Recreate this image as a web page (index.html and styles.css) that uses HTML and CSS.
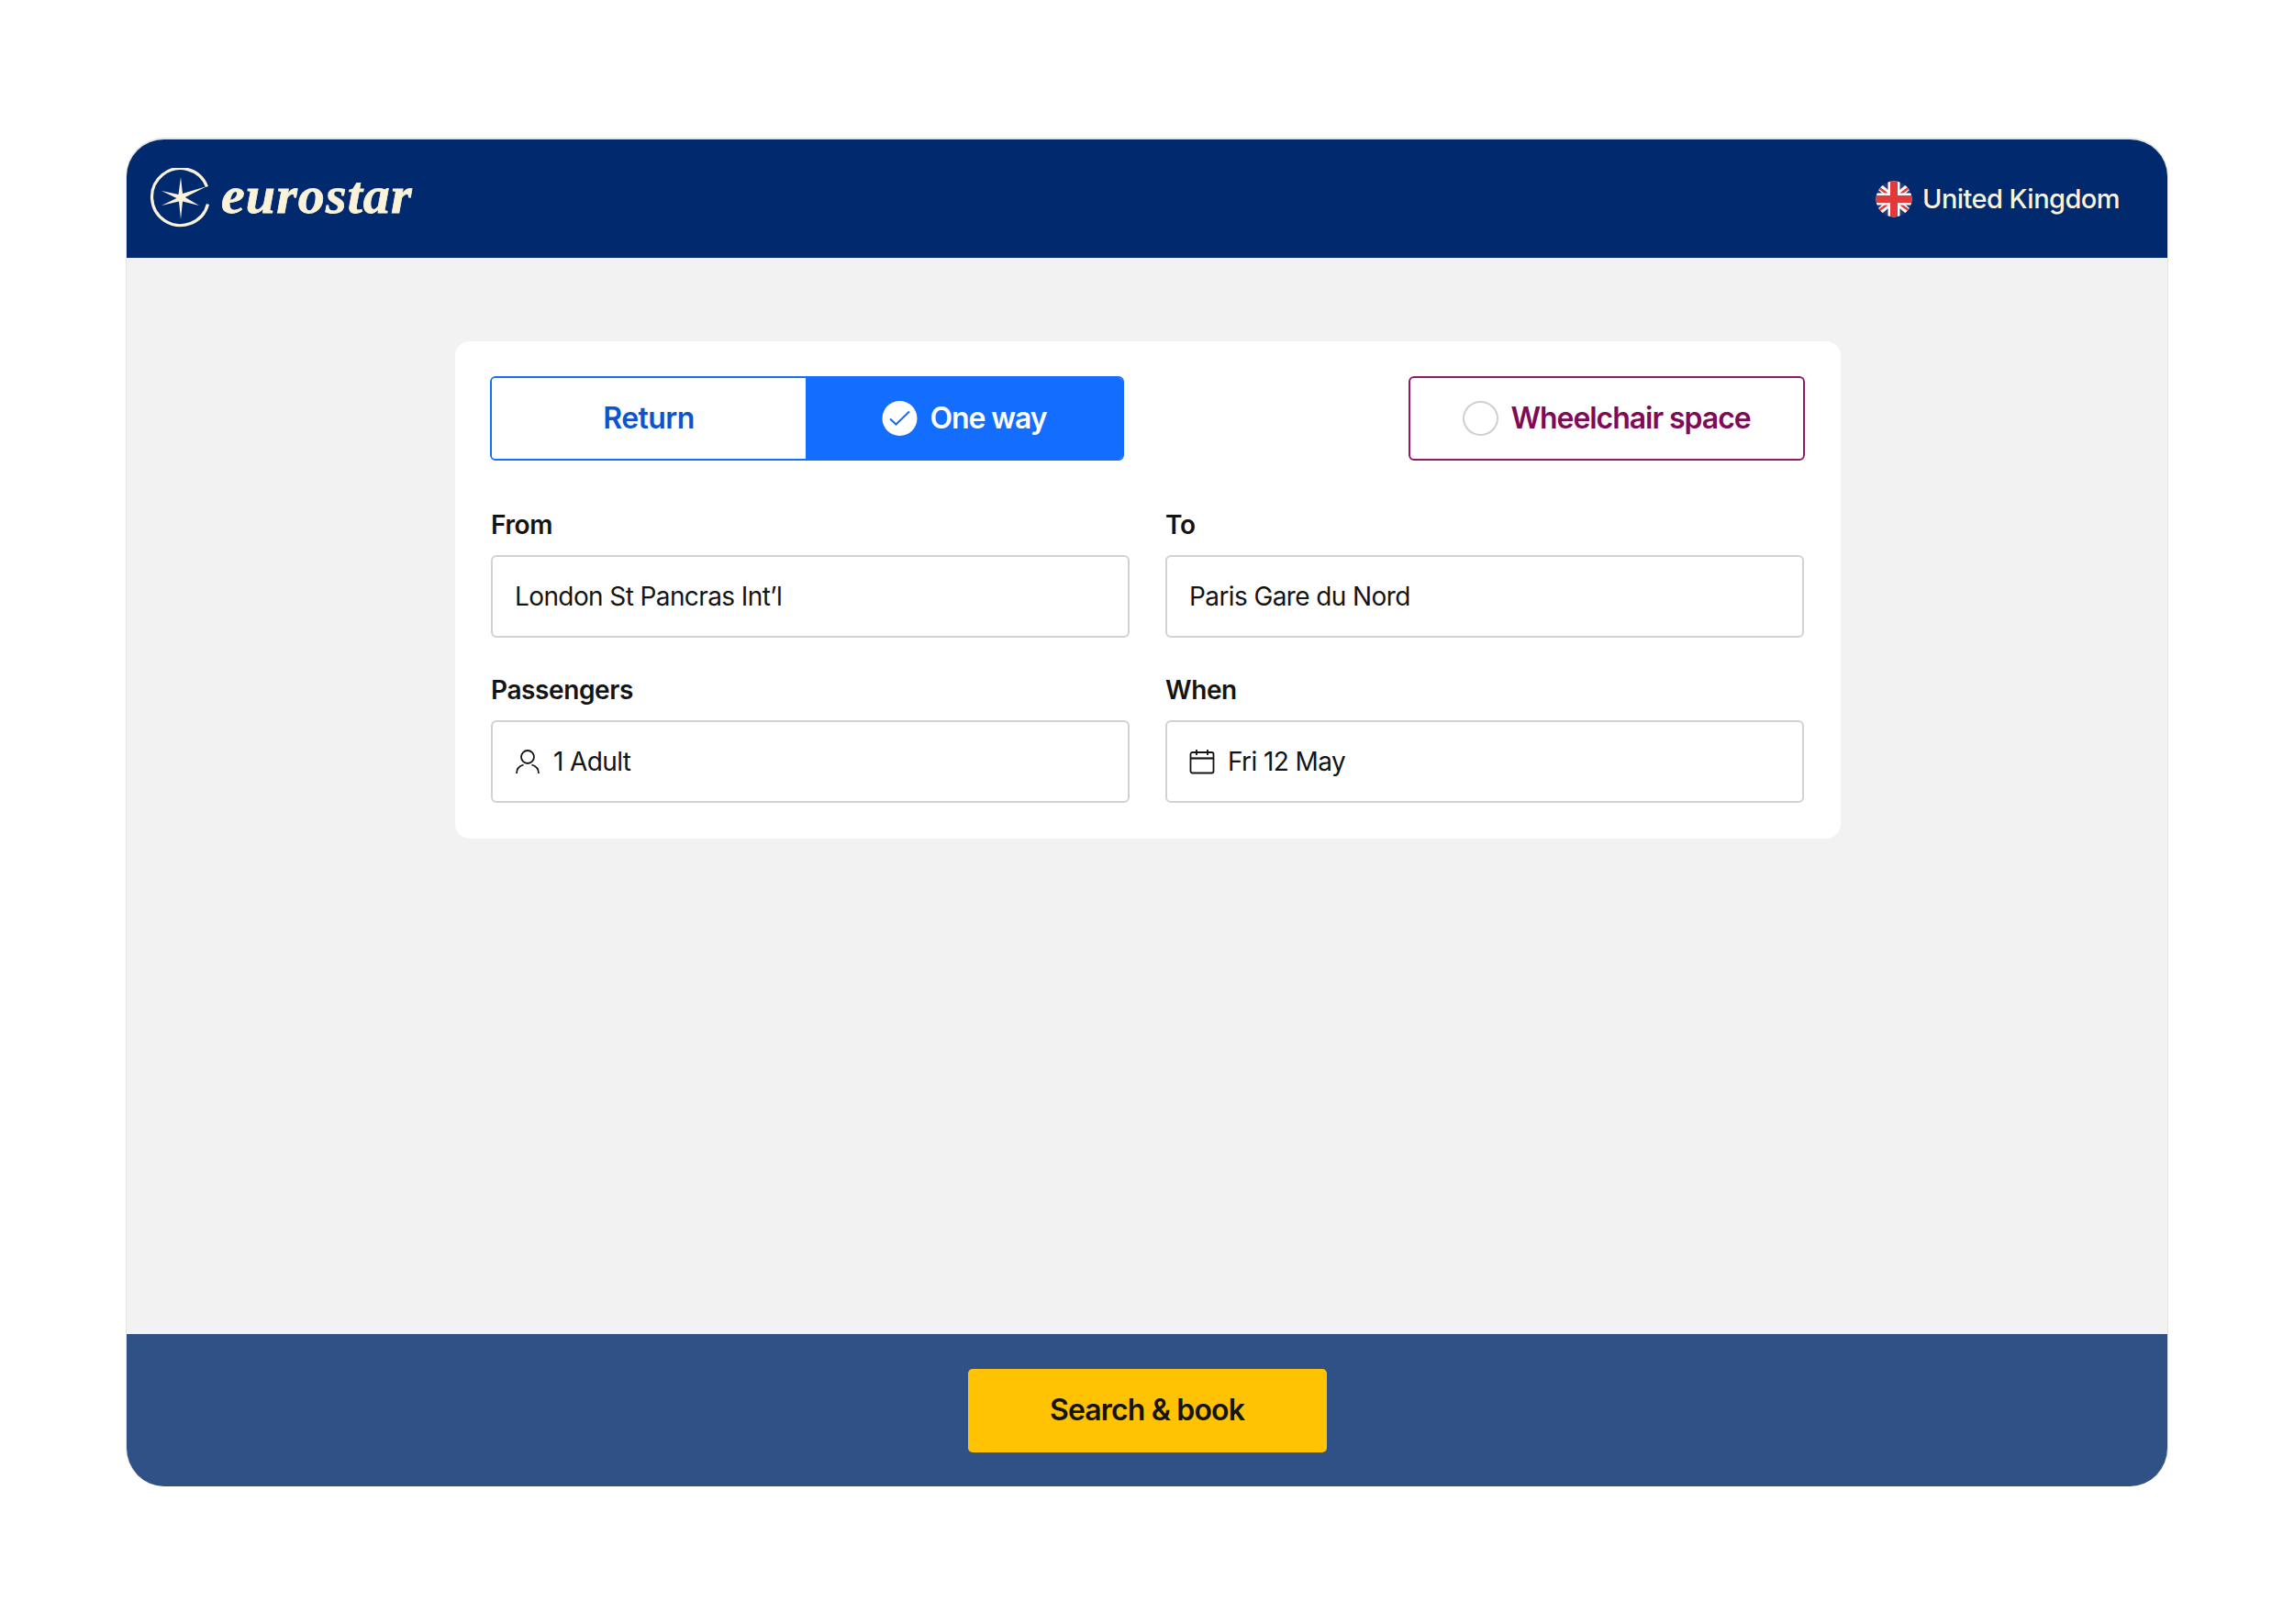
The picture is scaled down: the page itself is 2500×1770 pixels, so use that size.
FILE: index.html
```html
<!DOCTYPE html>
<html lang="en">
<head>
<meta charset="utf-8">
<title>Eurostar</title>
<link rel="stylesheet" href="styles.css">
</head>
<body>
<div class="frame">
  <header class="topbar">
    <div class="brand">
      <svg class="brand-mark" width="66" height="66" viewBox="0 0 66 66" aria-hidden="true">
        <path d="M62.500 20.500A31 31 0 1 0 63.500 39.500" fill="none" stroke="#fbf3d9" stroke-width="3.2"/>
        <path d="M34 10 L36 28 L62.500 20 L38.800 32 L54 41 L36 36.500 L34 56 L32 36.500 L13 41 L29.500 33 L13 25 L31.500 29 Z" fill="#fbf3d9"/>
      </svg>
      <span class="wordmark">eurostar</span>
    </div>
    <div class="locale">
      <svg class="flag" width="40" height="40" viewBox="0 0 40 40" aria-hidden="true">
        <defs><clipPath id="flag-clip"><circle cx="20" cy="20" r="19.5"/></clipPath></defs>
        <g clip-path="url(#flag-clip)">
          <rect width="40" height="40" fill="#2b3a75"/>
          <path d="M0 3 L40 37 M40 3 L0 37" stroke="#fff" stroke-width="7"/>
          <path d="M3 7 L15 16 M37 7 L25 16 M3 33 L15 24 M37 33 L25 24" stroke="#e23a3a" stroke-width="2.6"/>
          <path d="M20 0V40M0 20H40" stroke="#fff" stroke-width="13"/>
          <path d="M20 0V40M0 20H40" stroke="#e23a3a" stroke-width="8"/>
        </g>
      </svg>
      <span>United Kingdom</span>
    </div>
  </header>
  <main class="content">
    <section class="card">
      <div class="options">
        <div class="toggle">
          <div class="toggle-item">Return</div>
          <div class="toggle-item is-active">
            <svg width="39" height="38" viewBox="0 0 39 38" aria-hidden="true"><circle cx="19.500" cy="19" r="19" fill="#fff"/><path d="M9 19.500 L15.500 25.500 L30 11.500" fill="none" stroke="#136dff" stroke-width="2"/></svg>
            <span>One way</span>
          </div>
        </div>
        <div class="wheelchair"><span class="radio"></span><span>Wheelchair space</span></div>
      </div>
      <div class="fields">
        <div class="field">
          <div class="field-label">From</div>
          <div class="field-box">London St Pancras Int’l</div>
        </div>
        <div class="field">
          <div class="field-label">To</div>
          <div class="field-box">Paris Gare du Nord</div>
        </div>
        <div class="field">
          <div class="field-label">Passengers</div>
          <div class="field-box">
            <svg width="28" height="28" viewBox="0 0 28 28" aria-hidden="true"><circle cx="14" cy="9" r="7" fill="none" stroke="#141414" stroke-width="1.8"/><path d="M2 27C2 21 6 18.5 9.5 17.5 M26 27C26 21 22 18.500 18.500 17.500" fill="none" stroke="#141414" stroke-width="1.8"/></svg>
            1 Adult
          </div>
        </div>
        <div class="field">
          <div class="field-label">When</div>
          <div class="field-box">
            <svg width="28" height="28" viewBox="0 0 28 28" aria-hidden="true"><rect x="1.500" y="4" width="25" height="22.500" rx="2" fill="none" stroke="#141414" stroke-width="1.800"/><path d="M1.500 10.500H26.500" stroke="#141414" stroke-width="2.200"/><path d="M8 1V7M20 1V7" stroke="#141414" stroke-width="1.800"/></svg>
            Fri 12 May
          </div>
        </div>
      </div>
    </section>
  </main>
  <footer class="bottombar">
    <div class="search-button">Search &amp; book</div>
  </footer>
</div>
</body>
</html>
```
FILE: styles.css
```css
* { box-sizing: border-box; }
html, body { margin: 0; padding: 0; background: #fff; }
body {
  width: 2500px;
  height: 1770px;
  padding-top: 150px;
  font-family: "Inter", "Liberation Sans", sans-serif;
  color: #141414;
}
.frame {
  width: 2226px;
  height: 1470px;
  margin: 0 auto;
  display: flex;
  flex-direction: column;
  border: 1px solid #e3e3e3;
  border-top-width: 2px;
  border-bottom: 0;
  border-radius: 42px;
  overflow: hidden;
  background: #f2f2f2;
}
.topbar {
  height: 129px;
  flex: none;
  background: #002a6d;
  display: flex;
  align-items: center;
  justify-content: space-between;
  padding: 0 52px 2px 25px;
  color: #fbf3d9;
}
.brand { display: flex; align-items: center; gap: 12px; }
.brand-mark { display: block; }
.wordmark {
  font-family: "Liberation Serif", serif;
  font-style: italic;
  font-weight: 700;
  font-size: 58px;
  line-height: 1;
  letter-spacing: 1.1px;
  -webkit-text-stroke: 0.8px #fbf3d9;
  position: relative;
  top: -3px;
}
.locale {
  display: flex;
  align-items: center;
  gap: 11px;
  padding-top: 2px;
  font-size: 29px;
  font-weight: 500;
  letter-spacing: -0.55px;
}
.flag { display: block; }
.content {
  flex: 1;
  display: flex;
  justify-content: center;
  align-items: flex-start;
  padding: 91px 0 0 2px;
}
.card {
  width: 1510px;
  height: 542px;
  background: #fff;
  border-radius: 16px;
  padding: 38px 39px;
}
.options { display: flex; justify-content: space-between; height: 92px; margin-left: -1px; }
.toggle {
  width: 691px;
  display: grid;
  grid-template-columns: 342px 1fr;
  border: 2px solid #136dff;
  border-radius: 6px;
  overflow: hidden;
}
.toggle-item {
  display: flex;
  align-items: center;
  justify-content: center;
  gap: 14px;
  padding-bottom: 2px;
  font-size: 32px;
  font-weight: 600;
  letter-spacing: -0.6px;
  color: #0d55cf;
  background: #fff;
}
.toggle-item.is-active { background: #136dff; color: #fff; letter-spacing: -1.1px; }
.toggle-item.is-active svg { margin-top: 2px; }
.wheelchair {
  width: 432px;
  display: flex;
  align-items: center;
  justify-content: center;
  gap: 13px;
  padding-bottom: 2px;
  border: 2px solid #8f1a66;
  border-radius: 6px;
  font-size: 32px;
  font-weight: 600;
  letter-spacing: -1.05px;
  color: #7f0a56;
}
.radio {
  width: 39px;
  height: 38px;
  margin-top: 2px;
  border: 2px solid #cfcfcf;
  border-radius: 50%;
}
.fields {
  display: grid;
  grid-template-columns: 696px 696px;
  column-gap: 39px;
  row-gap: 40px;
  margin-top: 53px;
}
.field-label {
  font-size: 28px;
  font-weight: 600;
  line-height: 34px;
  letter-spacing: -0.4px;
  margin-bottom: 16px;
}
.field-box {
  height: 90px;
  display: flex;
  align-items: center;
  gap: 14px;
  padding: 0 24px;
  background: #fff;
  border: 2px solid #d2d2d2;
  border-radius: 6px;
  font-size: 28px;
  letter-spacing: -0.6px;
}
.bottombar {
  height: 166px;
  flex: none;
  margin-top: auto;
  background: #2f5185;
  display: flex;
  justify-content: center;
  padding-top: 38px;
}
.search-button {
  width: 391px;
  height: 91px;
  padding-bottom: 2px;
  background: #ffc303;
  border-radius: 5px;
  display: flex;
  align-items: center;
  justify-content: center;
  font-size: 32px;
  font-weight: 600;
  letter-spacing: -0.85px;
}
```
